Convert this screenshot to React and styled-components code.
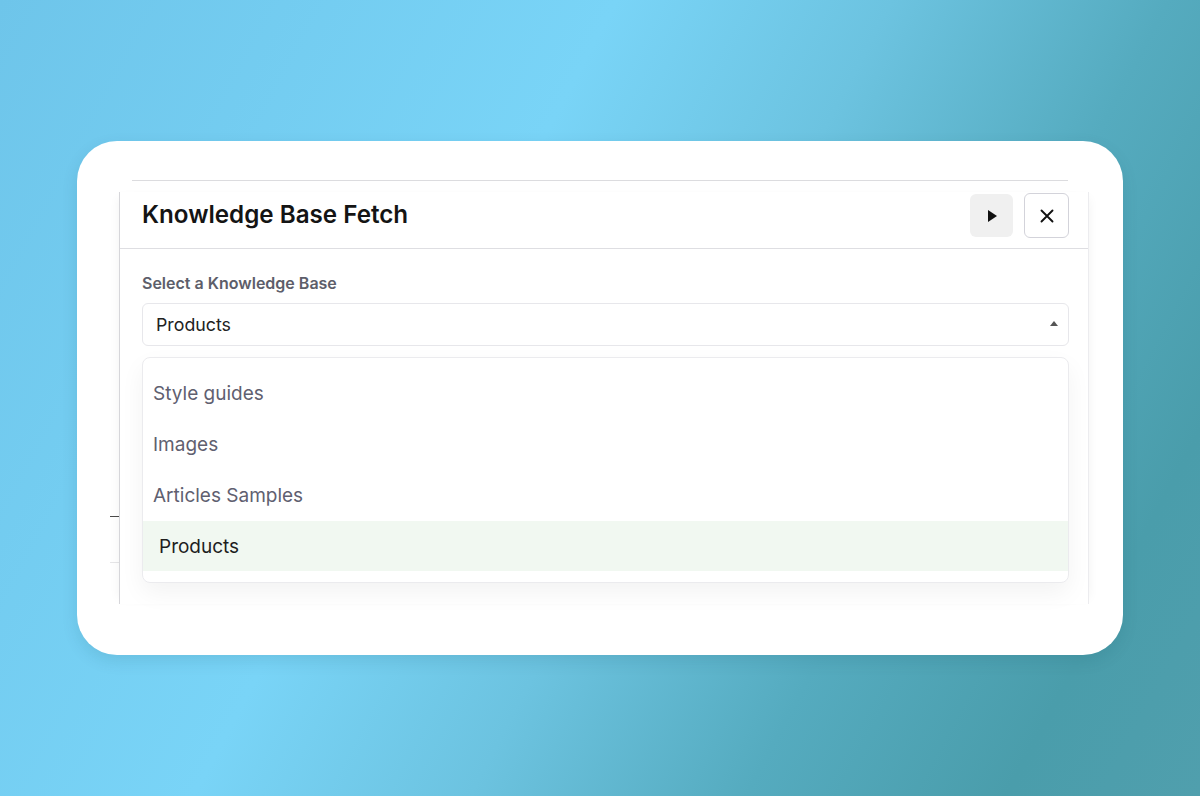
import React, { useState } from 'react'
import styled, { createGlobalStyle } from 'styled-components'

const Global = createGlobalStyle`
  html, body { margin: 0; padding: 0; }
  body { font-family: Inter, "Noto Sans", sans-serif; }
`

const Page = styled.div`
  width: 1200px;
  height: 796px;
  display: flex;
  align-items: center;
  justify-content: center;
  background: linear-gradient(118deg, #6ec5ea 0%, #79d4f7 38%, #6cc3e0 55%, #55abbf 72%, #4a9dab 88%, #509fad 100%);
  overflow: hidden;
`

const Card = styled.div`
  width: 1046px;
  height: 514px;
  background: #fff;
  border-radius: 40px;
  box-shadow: 0 6px 16px rgba(20, 70, 90, 0.12);
  padding-top: 39px;
  box-sizing: border-box;
  overflow: hidden;
`

const TopRule = styled.div`
  margin: 0 55px;
  height: 1px;
  background: #dcdcdf;
`

const Stage = styled.div`
  display: flex;
  margin-top: 11px;
  padding-left: 33px;
  padding-right: 34px;
`

const Stub = styled.div`
  width: 9px;
  display: flex;
  flex-direction: column;
  padding-top: 324px;
  gap: 45px;
`

const StubLine = styled.div`
  height: 1px;
  background: ${p => p.$dark ? '#4a4a4a' : '#e6e6e8'};
`

const Panel = styled.div`
  flex: 1;
  height: 412px;
  border-left: 1px solid #d6d6da;
  border-right: 1px solid #ececef;
  background: #fff;
  box-shadow: -6px 0 10px -6px rgba(0, 0, 0, 0.06), 6px 0 10px -6px rgba(0, 0, 0, 0.05);
`

const Header = styled.div`
  height: 57px;
  box-sizing: border-box;
  display: flex;
  align-items: flex-start;
  justify-content: space-between;
  padding: 1px 19px 0 22px;
  border-bottom: 1px solid #dedee2;
`

const Title = styled.h2`
  margin: 0;
  font-size: 24.2px;
  line-height: 44px;
  font-weight: 600;
  color: #141414;
`

const Actions = styled.div`
  display: flex;
  gap: 11px;
  align-items: center;
`

const IconButton = styled.button`
  width: ${p => p.$outline ? '45px' : '43px'};
  height: ${p => p.$outline ? '45px' : '43px'};
  display: flex;
  align-items: center;
  justify-content: center;
  border-radius: 6px;
  border: ${p => p.$outline ? '1px solid #d3d3da' : 'none'};
  background: ${p => p.$outline ? '#fff' : '#f0f0f0'};
  padding: 0;
  color: #111;
  cursor: pointer;
`

const Body = styled.div`
  padding: 25px 19px 0 22px;
`

const Label = styled.div`
  font-size: 16px;
  font-weight: 600;
  color: #5d5e6a;
  line-height: 18px;
`

const SelectBox = styled.div`
  margin-top: 11px;
  height: 43px;
  box-sizing: border-box;
  border: 1px solid #e7e7eb;
  border-radius: 6px;
  display: flex;
  align-items: center;
  justify-content: space-between;
  padding: 0 10px 0 13px;
  font-size: 17.8px;
  color: #222;
`

const Caret = styled.span`
  width: 0;
  height: 0;
  border-left: 4px solid transparent;
  border-right: 4px solid transparent;
  border-bottom: 5px solid #555;
  margin-bottom: 2px;
`

const Menu = styled.div`
  margin-top: 11px;
  border: 1px solid #ebebee;
  border-radius: 8px;
  padding: 10px 0 11px;
  box-shadow: 0 10px 24px rgba(0, 0, 0, 0.05);
  background: #fff;
`

const Option = styled.div`
  height: ${p => p.$active ? '50px' : '51px'};
  display: flex;
  align-items: center;
  padding-left: ${p => p.$active ? '16px' : '10px'};
  font-size: 19px;
  color: ${p => p.$active ? '#1e1e1e' : '#5f6070'};
  background: ${p => p.$active ? '#f1f8f1' : 'transparent'};
`

const options = ['Style guides', 'Images', 'Articles Samples', 'Products']

export default function App() {
  const [selected, setSelected] = useState('Products')

  return (
    <>
      <Global />
      <Page>
        <Card>
          <TopRule />
          <Stage>
            <Stub>
              <StubLine $dark />
              <StubLine />
            </Stub>
            <Panel>
              <Header>
                <Title>Knowledge Base Fetch</Title>
                <Actions>
                  <IconButton aria-label="Run">
                    <svg width="12" height="14" viewBox="0 0 12 14">
                      <path d="M2 1 L11 7 L2 13 Z" fill="#111" />
                    </svg>
                  </IconButton>
                  <IconButton $outline aria-label="Close">
                    <svg width="14" height="14" viewBox="0 0 14 14">
                      <path d="M1.5 1.5 L12.5 12.5 M12.5 1.5 L1.5 12.5" stroke="#111" strokeWidth="1.9" strokeLinecap="round" />
                    </svg>
                  </IconButton>
                </Actions>
              </Header>
              <Body>
                <Label>Select a Knowledge Base</Label>
                <SelectBox>
                  {selected}
                  <Caret />
                </SelectBox>
                <Menu>
                  {options.map(o => (
                    <Option key={o} $active={o === selected} onClick={() => setSelected(o)}>{o}</Option>
                  ))}
                </Menu>
              </Body>
            </Panel>
          </Stage>
        </Card>
      </Page>
    </>
  )
}
